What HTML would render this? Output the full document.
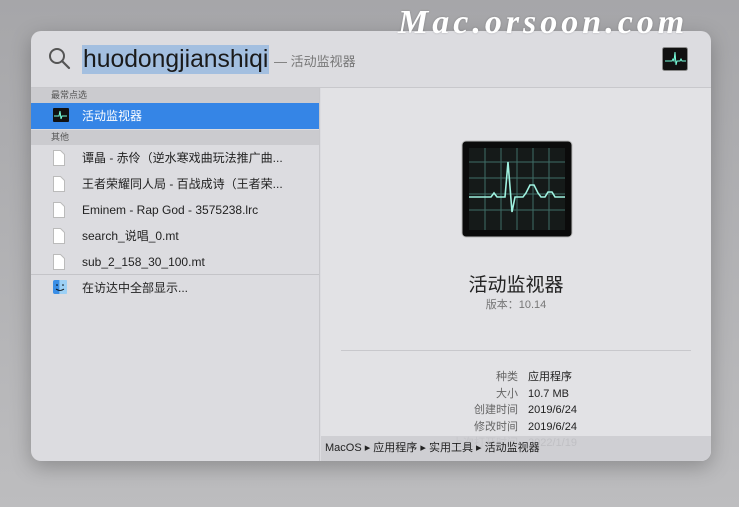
<!DOCTYPE html>
<html><head><meta charset="utf-8"><style>
*{margin:0;padding:0;box-sizing:border-box}
body{width:739px;height:507px;overflow:hidden;background:linear-gradient(#a6a6a9,#bdbdbf);font-family:"Liberation Sans","Noto Sans CJK SC",sans-serif;position:relative}
.wm{position:absolute;left:398px;top:4px;font:bold italic 34px "Liberation Serif","Noto Serif CJK SC",serif;color:#fff;letter-spacing:4px;text-shadow:0 0 2px rgba(0,0,0,.2)}
.win{position:absolute;left:31px;top:31px;width:680px;height:430px;background:#dcdce0;border-radius:10px;overflow:hidden;box-shadow:0 6px 20px rgba(0,0,0,.25)}
.search{position:absolute;left:0;top:0;width:680px;height:57px;border-bottom:1px solid #c8c8cc}
.q{position:absolute;left:51px;top:14px;height:29px;background:#a3bfe0;font-size:24.7px;line-height:29px;color:#1a1a1a;padding:0 1px}
.sub{position:absolute;left:243px;top:20px;font-size:13px;color:#777}
.left{position:absolute;left:0;top:57px;width:289px;height:373px;border-right:1px solid #c8c8cc}
.hdr{height:15px;background:#cbcbcf;font-size:9px;color:#555;padding-left:20px;line-height:15px}
.row{height:26px;font-size:12px;color:#222;line-height:26px;padding-left:51px;position:relative}
.row.sel{background:#3585e6;color:#fff}
.ic{position:absolute;left:22px;top:5px}
.right{position:absolute;left:290px;top:57px;width:390px;height:373px;background:#e2e2e5}
.path{position:absolute;left:290px;top:405px;width:390px;height:25px;background:rgba(205,205,209,.92);font-size:11px;color:#222;line-height:25px;padding-left:4px}
.info{position:absolute;font-size:11px;color:#222;line-height:16.5px}
</style></head><body>
<div class="win">
 <div class="search">
  <svg style="position:absolute;left:17px;top:16px" width="24" height="24" viewBox="0 0 24 24"><circle cx="9" cy="9" r="7" fill="none" stroke="#555" stroke-width="2"/><path d="M14 14l7 7" stroke="#555" stroke-width="2.2" stroke-linecap="round"/></svg>
  <div class="q">huodongjianshiqi</div>
  <div class="sub">— 活动监视器</div>
  <svg style="position:absolute;left:631px;top:16px" width="26" height="24" viewBox="0 0 26 24"><rect x="0.5" y="0.5" width="25" height="23" rx="2" fill="#111" stroke="#888"/><path d="M3 14h7l1-2 1 2 1-9 1 13 1-4h3l1-2 1 2h4" stroke="#7fd" stroke-width="1" fill="none"/></svg>
 </div>
 <div class="left">
  <div class="hdr">最常点选</div>
  <div class="row sel"><svg class="ic" width="16" height="14" viewBox="0 0 16 14"><rect width="16" height="14" rx="1" fill="#111"/><path d="M1 8h5l1-5 1 8 1-3h5" stroke="#7fd" fill="none"/></svg>活动监视器</div>
  <div class="hdr" style="margin-top:1px">其他</div>
  <div class="row"><svg class="ic" width="12" height="16" viewBox="0 0 12 16"><path d="M.5.5h7l4 4v11H.5z" fill="#fff" stroke="#bbb"/></svg>谭晶 - 赤伶（逆水寒戏曲玩法推广曲...</div>
  <div class="row"><svg class="ic" width="12" height="16" viewBox="0 0 12 16"><path d="M.5.5h7l4 4v11H.5z" fill="#fff" stroke="#bbb"/></svg>王者荣耀同人局 - 百战成诗（王者荣...</div>
  <div class="row"><svg class="ic" width="12" height="16" viewBox="0 0 12 16"><path d="M.5.5h7l4 4v11H.5z" fill="#fff" stroke="#bbb"/></svg>Eminem - Rap God - 3575238.lrc</div>
  <div class="row"><svg class="ic" width="12" height="16" viewBox="0 0 12 16"><path d="M.5.5h7l4 4v11H.5z" fill="#fff" stroke="#bbb"/></svg>search_说唱_0.mt</div>
  <div class="row" style="border-bottom:1px solid #c4c4c8"><svg class="ic" width="12" height="16" viewBox="0 0 12 16"><path d="M.5.5h7l4 4v11H.5z" fill="#fff" stroke="#bbb"/></svg>sub_2_158_30_100.mt</div>
  <div class="row"><svg class="ic" width="14" height="14" viewBox="0 0 14 14"><rect width="14" height="14" rx="2" fill="#3a8ee6"/><path d="M7 0v14" stroke="#bde"/><rect x="7" width="7" height="14" rx="1" fill="#9cd0f5"/><circle cx="4" cy="5" r=".8" fill="#000"/><circle cx="10" cy="5" r=".8" fill="#000"/><path d="M3 9q4 3 8 0" stroke="#000" fill="none" stroke-width=".8"/></svg>在访达中全部显示...</div>
 </div>
 <div class="right">
  <svg style="position:absolute;left:140px;top:52px" width="112" height="98" viewBox="0 0 112 98"><rect x="1" y="1" width="110" height="96" rx="4" fill="#0b0b0b" stroke="#bbb"/><rect x="8" y="8" width="96" height="82" fill="#151a19"/><g stroke="#3f6d66" stroke-width="1"><path d="M8 22h96M8 38h96M8 54h96M8 70h96M24 8v82M40 8v82M56 8v82M72 8v82M88 8v82"/></g><path d="M8 57h22l3-4 3 4h8l3-35 4 50 3-15h8l3-4 4-8 4 0 4 8 3 4 4 0 3-5 4 0 3 5h10" stroke="#9ff2e0" stroke-width="1.6" fill="none"/></svg>
  <div style="position:absolute;left:0;width:390px;top:182px;text-align:center;font-size:19px;color:#222">活动监视器</div>
  <div style="position:absolute;left:0;width:390px;top:208px;text-align:center;font-size:11px;color:#777">版本：10.14</div>
  <div style="position:absolute;left:20px;top:262px;width:350px;height:1px;background:#c8c8cc"></div>
  <div class="info" style="right:193px;top:281px;text-align:right;color:#666">种类<br>大小<br>创建时间<br>修改时间<br>上次打开时间</div>
  <div class="info" style="left:207px;top:281px">应用程序<br>10.7 MB<br>2019/6/24<br>2019/6/24<br>2022/1/19</div>
 </div>
 <div class="path">MacOS ▸ 应用程序 ▸ 实用工具 ▸ 活动监视器</div>
</div>
<div class="wm">Mac.orsoon.com</div>
</body></html>
